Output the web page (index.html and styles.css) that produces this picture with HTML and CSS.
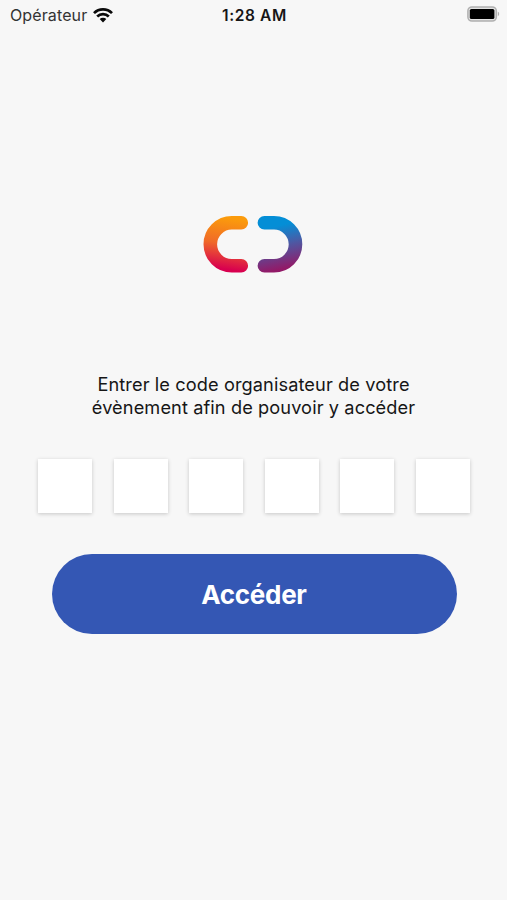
FILE: index.html
```html
<!DOCTYPE html>
<html lang="fr">
<head>
  <meta charset="UTF-8" />
  <meta name="viewport" content="width=device-width, initial-scale=1.0"/>
  <title>Code organisateur</title>
  <link rel="stylesheet" href="styles.css">
</head>
<body>
  <header class="status-bar">
    <div class="operator">
      <span class="operator-name">Opérateur</span>
      <svg class="wifi" width="20" height="15" viewBox="0 0 20 15">
        <g fill="none" stroke="#0a0a0a" stroke-width="2.7">
          <path d="M1 5.1a12.7 12.7 0 0 1 18 0"/>
          <path d="M4.2 8.5a8.2 8.2 0 0 1 11.6 0"/>
        </g>
        <path d="M6.7 11a4.7 4.7 0 0 1 6.6 0L10 14.4z" fill="#0a0a0a"/>
      </svg>
    </div>
    <span class="time">1:28 AM</span>
    <svg class="battery" width="33" height="16" viewBox="0 0 33 16">
      <rect x="0.9" y="0.9" width="28.4" height="14.2" rx="4" fill="#e2e2e2" stroke="#b0b0b0" stroke-width="1.5"/>
      <rect x="2.8" y="2.9" width="24.6" height="10.2" rx="1.6" fill="#000"/>
      <path d="M30.8 5.8c1.8.5 1.8 3.9 0 4.4z" fill="#b0b0b0"/>
    </svg>
  </header>

  <main class="content">
    <svg class="logo" width="100" height="58" viewBox="0 0 100 58">
      <defs>
        <linearGradient id="warm" gradientUnits="userSpaceOnUse" x1="30" y1="1" x2="22" y2="57">
          <stop offset="0.05" stop-color="#fb9b0c"/>
          <stop offset="0.5" stop-color="#f06a28"/>
          <stop offset="0.95" stop-color="#d8004f"/>
        </linearGradient>
        <linearGradient id="cold" gradientUnits="userSpaceOnUse" x1="66" y1="1" x2="78" y2="57">
          <stop offset="0.2" stop-color="#048ed6"/>
          <stop offset="0.55" stop-color="#4f57a2"/>
          <stop offset="0.95" stop-color="#921a68"/>
        </linearGradient>
      </defs>
      <g fill="none" stroke-width="13.6" stroke-linecap="round">
        <path d="M38.3 7.8H28.8a21.5 21.5 0 0 0 0 43H38.3" stroke="url(#warm)"/>
        <path d="M61.4 7.8H71a21.5 21.5 0 0 1 0 43H61.4" stroke="url(#cold)"/>
      </g>
    </svg>

    <p class="message">Entrer le code organisateur de votre<br>évènement afin de pouvoir y accéder</p>

    <form class="code-form">
      <div class="code">
        <input class="code-digit" type="text" maxlength="1" aria-label="Chiffre 1">
        <input class="code-digit" type="text" maxlength="1" aria-label="Chiffre 2">
        <input class="code-digit" type="text" maxlength="1" aria-label="Chiffre 3">
        <input class="code-digit" type="text" maxlength="1" aria-label="Chiffre 4">
        <input class="code-digit" type="text" maxlength="1" aria-label="Chiffre 5">
        <input class="code-digit" type="text" maxlength="1" aria-label="Chiffre 6">
      </div>
      <button class="btn-acceder" type="button">Accéder</button>
    </form>
  </main>
</body>
</html>
```
FILE: styles.css
```css
* {
  box-sizing: border-box;
}

body {
  font-family: Inter, "Liberation Sans", sans-serif;
  margin: 0;
  min-height: 900px;
  background-color: #f7f7f7;
  color: #161616;
}

/* Barre de statut */
.status-bar {
  display: grid;
  grid-template-columns: 1fr auto 1fr;
  align-items: center;
  height: 30px;
  padding: 0 8px 0 10px;
}

.operator {
  display: flex;
  align-items: center;
  gap: 6px;
}

.operator-name {
  font-size: 16px;
  letter-spacing: 0.12px;
  color: #333;
}

.time {
  font-size: 15.5px;
  font-weight: 600;
  letter-spacing: 0.6px;
}

.battery {
  justify-self: end;
  margin-right: -1px;
  margin-bottom: 2px;
}

.content {
  display: flex;
  flex-direction: column;
  align-items: center;
}

.logo {
  margin-top: 185px;
  margin-right: 1px;
}

.message {
  margin: 100px 0 0;
  font-size: 18.2px;
  line-height: 23px;
  letter-spacing: 0.1px;
  text-align: center;
}

.code-form {
  display: flex;
  flex-direction: column;
  align-items: center;
  margin-top: 40px;
  padding-left: 1px;
}

.code {
  display: flex;
  gap: 21.5px;
}

.code-digit {
  width: 54px;
  height: 54px;
  padding: 0;
  border: none;
  background-color: #fff;
  box-shadow: 0 1px 4px rgba(0, 0, 0, 0.2);
  font-size: 24px;
  text-align: center;
}

.btn-acceder {
  width: 405px;
  height: 80px;
  margin-top: 41px;
  padding: 0;
  border: none;
  border-radius: 40px;
  background-color: #3457b4;
  color: #fff;
  font-family: inherit;
  font-size: 26px;
  font-weight: 700;
  letter-spacing: -0.3px;
}
```
